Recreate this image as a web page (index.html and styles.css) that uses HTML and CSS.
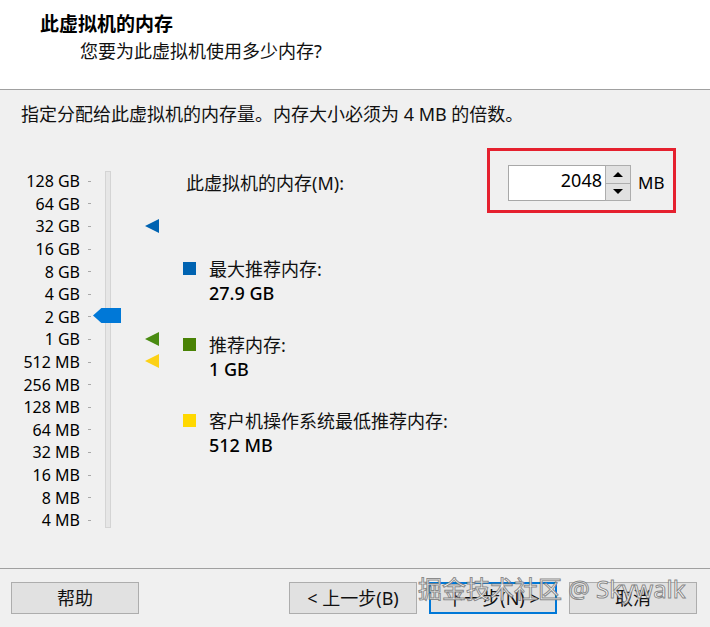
FILE: index.html
```html
<!DOCTYPE html>
<html lang="zh-CN">
<head>
<meta charset="utf-8">
<title>新建虚拟机向导 - 内存</title>
<link rel="stylesheet" href="styles.css">
</head>
<body>
<div class="dialog">
  <header class="header">
    <div class="title">此虚拟机的内存</div>
    <div class="subtitle">您要为此虚拟机使用多少内存?</div>
  </header>
  <main class="main">
    <p class="hint">指定分配给此虚拟机的内存量。内存大小必须为 4 MB 的倍数。</p>
    <div class="content">
      <div class="scale">
        <ul class="ticks">
          <li><span class="lbl">128 GB</span><span class="tick"></span></li>
          <li><span class="lbl">64 GB</span><span class="tick"></span></li>
          <li><span class="lbl">32 GB</span><span class="tick"></span></li>
          <li><span class="lbl">16 GB</span><span class="tick"></span></li>
          <li><span class="lbl">8 GB</span><span class="tick"></span></li>
          <li><span class="lbl">4 GB</span><span class="tick"></span></li>
          <li><span class="lbl">2 GB</span><span class="tick"></span></li>
          <li><span class="lbl">1 GB</span><span class="tick"></span></li>
          <li><span class="lbl">512 MB</span><span class="tick"></span></li>
          <li><span class="lbl">256 MB</span><span class="tick"></span></li>
          <li><span class="lbl">128 MB</span><span class="tick"></span></li>
          <li><span class="lbl">64 MB</span><span class="tick"></span></li>
          <li><span class="lbl">32 MB</span><span class="tick"></span></li>
          <li><span class="lbl">16 MB</span><span class="tick"></span></li>
          <li><span class="lbl">8 MB</span><span class="tick"></span></li>
          <li><span class="lbl">4 MB</span><span class="tick"></span></li>
        </ul>
        <div class="track"></div>
        <div class="thumb" style="top:160px"></div>
        <div class="marker marker-max" style="top:71px"></div>
        <div class="marker marker-rec" style="top:184px"></div>
        <div class="marker marker-min" style="top:206px"></div>
      </div>
      <div class="panel">
        <div class="mem-row">
          <label class="mem-label">此虚拟机的内存(M):</label>
          <div class="highlight">
            <div class="spin">
              <div class="spin-input">2048</div>
              <div class="spin-btns">
                <span class="spin-btn"><span class="arrow-up"></span></span>
                <span class="spin-btn"><span class="arrow-down"></span></span>
              </div>
            </div>
            <span class="unit">MB</span>
          </div>
        </div>
        <div class="legend">
          <div class="legend-item">
            <span class="swatch swatch-max"></span>
            <div>
              <div class="legend-label">最大推荐内存:</div>
              <div class="legend-value">27.9 GB</div>
            </div>
          </div>
          <div class="legend-item">
            <span class="swatch swatch-rec"></span>
            <div>
              <div class="legend-label">推荐内存:</div>
              <div class="legend-value">1 GB</div>
            </div>
          </div>
          <div class="legend-item">
            <span class="swatch swatch-min"></span>
            <div>
              <div class="legend-label">客户机操作系统最低推荐内存:</div>
              <div class="legend-value">512 MB</div>
            </div>
          </div>
        </div>
      </div>
    </div>
  </main>
  <footer class="footer">
    <button class="btn btn-help">帮助</button>
    <button class="btn">&lt; 上一步(B)</button>
    <button class="btn btn-default">下一步(N) &gt;</button>
    <button class="btn">取消</button>
  </footer>
  <div class="watermark">掘金技术社区 @ Skywalk</div>
</div>
</body>
</html>
```
FILE: styles.css
```css
* { box-sizing: border-box; }
html, body { margin: 0; padding: 0; }
body {
  width: 710px;
  height: 627px;
  overflow: hidden;
  background: #f0f0f0;
  font-family: "Noto Sans", "Noto Sans CJK SC", sans-serif;
  font-size: 18px;
  color: #111;
}
.dialog {
  position: relative;
  width: 710px;
  height: 627px;
  display: flex;
  flex-direction: column;
}
.header {
  height: 90px;
  background: #fff;
  border-bottom: 1px solid #a0a0a0;
  padding-top: 12px;
}
.title {
  padding-left: 40px;
  font-size: 19px;
  font-weight: 700;
  line-height: 24px;
  color: #000;
}
.subtitle {
  margin-top: 4px;
  padding-left: 80px;
  line-height: 22px;
}
.main {
  flex: 1;
  padding-top: 13px;
}
.hint {
  margin: 0;
  padding-left: 21px;
  line-height: 22px;
}
.content {
  margin-top: 23px;
  display: flex;
}
.scale {
  position: relative;
  width: 183px;
  display: flex;
  align-items: flex-start;
}
.ticks {
  list-style: none;
  margin: 0;
  padding: 22px 0 0 0;
  width: 91px;
}
.ticks li {
  height: 22.6px;
  display: flex;
  align-items: center;
  justify-content: flex-end;
}
.lbl {
  font-size: 16px;
  line-height: 20px;
  color: #000;
}
.tick {
  width: 3px;
  height: 1px;
  margin-left: 8px;
  background: #a8a8a8;
}
.track {
  margin-top: 23px;
  margin-left: 14px;
  width: 6px;
  height: 357px;
  background: #e6e6e6;
  border: 1px solid #d4d4d4;
}
.thumb {
  position: absolute;
  left: 93px;
  width: 28px;
  height: 15px;
  background: #0078d7;
  clip-path: polygon(0 50%, 30% 0, 100% 0, 100% 100%, 30% 100%);
}
.marker {
  position: absolute;
  left: 145px;
  width: 14px;
  height: 14px;
  clip-path: polygon(0 50%, 100% 0, 100% 100%);
}
.marker-max { background: #0063b1; }
.marker-rec { background: #4a8b12; }
.marker-min { background: #fcd116; }
.panel {
  flex: 1;
  padding-right: 34px;
}
.mem-row {
  display: flex;
  justify-content: space-between;
  align-items: flex-start;
}
.mem-label {
  padding-left: 3px;
  padding-top: 24px;
  line-height: 22px;
}
.highlight {
  width: 189px;
  height: 65px;
  border: 3px solid #e5202e;
  display: flex;
  align-items: flex-start;
  padding: 14px 0 0 18px;
}
.spin {
  display: flex;
  height: 36px;
}
.spin-input {
  width: 97px;
  height: 36px;
  background: #fff;
  border: 1px solid #a8a8a8;
  border-right: none;
  text-align: right;
  padding-right: 3px;
  line-height: 28px;
  color: #000;
}
.spin-btns {
  width: 26px;
  height: 36px;
  display: flex;
  flex-direction: column;
  border: 1px solid #adadad;
  background: #e1e1e1;
}
.spin-btn {
  flex: 1;
  display: flex;
  align-items: center;
  justify-content: center;
}
.spin-btn + .spin-btn { border-top: 1px solid #adadad; }
.arrow-up, .arrow-down {
  width: 0;
  height: 0;
  border-left: 5px solid transparent;
  border-right: 5px solid transparent;
}
.arrow-up { border-bottom: 5px solid #000; }
.arrow-down { border-top: 5px solid #000; }
.unit {
  margin-left: 7px;
  font-size: 17px;
  line-height: 36px;
  color: #000;
}
.legend {
  margin-top: 44px;
  display: flex;
  flex-direction: column;
  gap: 28px;
}
.legend-item {
  display: flex;
  align-items: flex-start;
}
.swatch {
  width: 13px;
  height: 13px;
  margin-top: 5px;
  margin-right: 13px;
  flex: none;
}
.swatch-max { background: #0063b1; }
.swatch-rec { background: #498205; }
.swatch-min { background: #ffd800; }
.legend-label { line-height: 24px; }
.legend-value {
  line-height: 24px;
  font-weight: 500;
  color: #000;
}
.footer {
  height: 59px;
  border-top: 1px solid #a0a0a0;
  padding: 13px 13px 0 11px;
  display: flex;
  align-items: flex-start;
  gap: 12px;
}
.btn {
  width: 128px;
  height: 32px;
  background: #e1e1e1;
  border: 1px solid #adadad;
  font-family: inherit;
  font-size: 18px;
  color: #111;
  padding: 0;
  line-height: 28px;
}
.btn-help { margin-right: auto; }
.btn-default { border: 2px solid #0078d7; }
.watermark {
  position: absolute;
  left: 418px;
  top: 577px;
  font-size: 24px;
  line-height: 24px;
  color: rgba(255, 255, 255, 0.9);
  -webkit-text-stroke: 1px rgba(110, 110, 110, 0.8);
  white-space: nowrap;
  pointer-events: none;
}
```
